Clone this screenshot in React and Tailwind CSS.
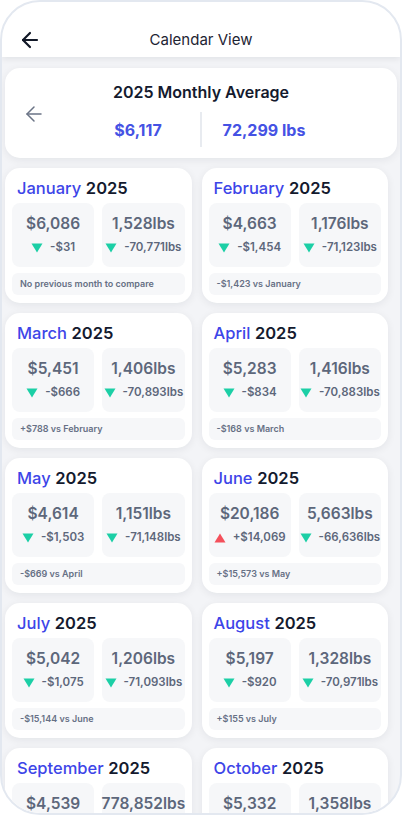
import React from 'react';
import { ArrowLeft } from 'lucide-react';

const months = [
  { name: 'January', cost: '$6,086', costDelta: '-$31', costUp: false, lbs: '1,528lbs', lbsDelta: '-70,771lbs', note: 'No previous month to compare' },
  { name: 'February', cost: '$4,663', costDelta: '-$1,454', costUp: false, lbs: '1,176lbs', lbsDelta: '-71,123lbs', note: '-$1,423 vs January' },
  { name: 'March', cost: '$5,451', costDelta: '-$666', costUp: false, lbs: '1,406lbs', lbsDelta: '-70,893lbs', note: '+$788 vs February' },
  { name: 'April', cost: '$5,283', costDelta: '-$834', costUp: false, lbs: '1,416lbs', lbsDelta: '-70,883lbs', note: '-$168 vs March' },
  { name: 'May', cost: '$4,614', costDelta: '-$1,503', costUp: false, lbs: '1,151lbs', lbsDelta: '-71,148lbs', note: '-$669 vs April' },
  { name: 'June', cost: '$20,186', costDelta: '+$14,069', costUp: true, lbs: '5,663lbs', lbsDelta: '-66,636lbs', note: '+$15,573 vs May' },
  { name: 'July', cost: '$5,042', costDelta: '-$1,075', costUp: false, lbs: '1,206lbs', lbsDelta: '-71,093lbs', note: '-$15,144 vs June' },
  { name: 'August', cost: '$5,197', costDelta: '-$920', costUp: false, lbs: '1,328lbs', lbsDelta: '-70,971lbs', note: '+$155 vs July' },
  { name: 'September', cost: '$4,539', costDelta: '-$658', costUp: false, lbs: '778,852lbs', lbsDelta: '+706,553lbs', note: '-$658 vs August' },
  { name: 'October', cost: '$5,332', costDelta: '-$785', costUp: false, lbs: '1,358lbs', lbsDelta: '-70,941lbs', note: '+$793 vs September' },
];

const Triangle = ({ up }) => (
  <svg width="12" height="10" viewBox="0 0 12 10" className="shrink-0">
    {up ? (
      <path d="M6 0.5 L11.5 9.5 L0.5 9.5 Z" fill="#f4505b" />
    ) : (
      <path d="M0.5 0.5 L11.5 0.5 L6 9.5 Z" fill="#1ccfa6" />
    )}
  </svg>
);

const StatBox = ({ value, delta, up }) => (
  <div className="bg-[#f6f7f9] rounded-[8px] pt-[11px] pb-[11px] flex flex-col items-center">
    <div className="h-[20px] leading-[20px] text-[15.5px] font-semibold text-[#5d677b]">{value}</div>
    <div className="mt-[6px] h-[16px] flex items-center gap-[7px]">
      <Triangle up={up} />
      <span className="text-[11.5px] font-semibold text-[#5d677b]">{delta}</span>
    </div>
  </div>
);

const MonthCard = ({ m }) => (
  <div className="bg-white rounded-[15px] shadow-[0_2px_8px_rgba(15,23,42,0.07)] px-[7px] pt-[9px] pb-[8px]">
    <div className="px-[5px] h-[22px] leading-[22px] text-[16.5px] whitespace-nowrap">
      <span className="text-[#3d45e8] font-medium">{m.name}</span>{' '}
      <span className="text-[#141a2e] font-semibold">2025</span>
    </div>
    <div className="mt-[4px] grid grid-cols-2 gap-[8px]">
      <StatBox value={m.cost} delta={m.costDelta} up={m.costUp} />
      <StatBox value={m.lbs} delta={m.lbsDelta} up={false} />
    </div>
    <div className="mt-[6px] h-[22px] bg-[#f6f7f9] rounded-[6px] px-[8px] flex items-center">
      <span className="text-[9px] font-semibold text-[#667085] whitespace-nowrap">{m.note}</span>
    </div>
  </div>
);

export default function App() {
  return (
    <div className="w-[402px] h-[815px] bg-white" style={{ fontFamily: 'Inter, "Noto Sans", sans-serif' }}>
      <div className="w-full h-full rounded-[40px] border-2 border-[#e3e8f0] overflow-hidden bg-[#f3f4f7] flex flex-col">
        {/* Header */}
        <div className="h-[55px] shrink-0 bg-white shadow-[0_2px_6px_rgba(15,23,42,0.08)] pt-[26px] px-[16px] relative z-10">
          <div className="h-[24px] flex items-center">
            <ArrowLeft size={24} strokeWidth={2.2} className="text-[#111827]" />
            <div className="flex-1 text-center text-[15px] text-[#1e2433] pr-[24px]">Calendar View</div>
          </div>
        </div>

        {/* Content */}
        <div className="flex-1 overflow-hidden px-[3px] pt-[11px]">
          {/* Summary */}
          <div className="bg-white rounded-[15px] shadow-[0_2px_8px_rgba(15,23,42,0.07)] pt-[12px] pb-[11px] flex items-center">
            <div className="w-[46px] pl-[17px] shrink-0 flex items-center">
              <ArrowLeft size={24} strokeWidth={1.5} className="text-[#6b7486]" />
            </div>
            <div className="flex-1 flex flex-col items-center">
              <div className="h-[24px] leading-[24px] text-[16px] font-semibold text-[#141a2e]">2025 Monthly Average</div>
              <div className="mt-[8px] w-[250px] h-[35px] flex items-center">
                <div className="flex-1 text-center text-[16px] font-bold text-[#4552e4]">$6,117</div>
                <div className="w-[2px] h-[35px] bg-[#e8ebf0]" />
                <div className="flex-1 text-center text-[16px] font-bold text-[#4552e4]">72,299 lbs</div>
              </div>
            </div>
            <div className="w-[46px] shrink-0" />
          </div>

          {/* Month grid */}
          <div className="mt-[10px] pr-[9px] grid grid-cols-2 gap-x-[10px] gap-y-[10px]">
            {months.map((m) => (
              <MonthCard key={m.name} m={m} />
            ))}
          </div>
        </div>
      </div>
    </div>
  );
}
